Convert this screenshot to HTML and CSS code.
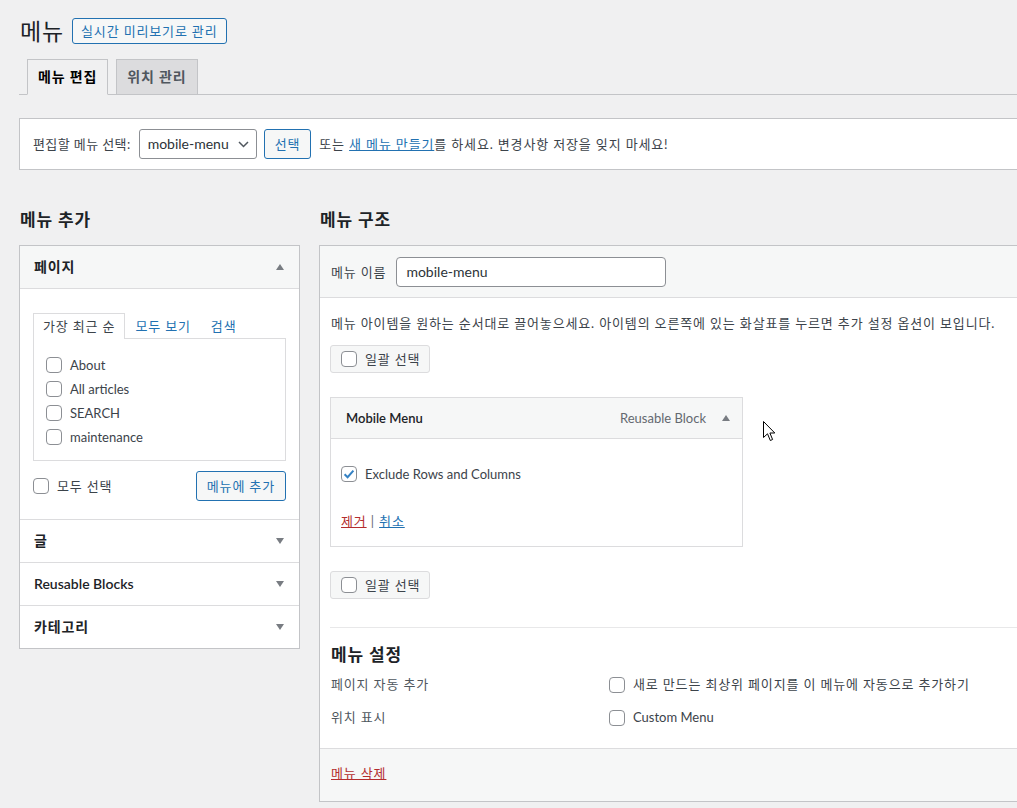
FILE: index.html
```html
<!DOCTYPE html>
<html lang="ko">
<head>
<meta charset="utf-8">
<title>메뉴</title>
<link rel="stylesheet" href="styles.css">
</head>
<body>
<div class="page">
  <div class="title-row">
    <h1>메뉴</h1>
    <a class="btn-outline" href="#">실시간 미리보기로 관리</a>
  </div>

  <nav class="tabs">
    <a class="tab active" href="#">메뉴 편집</a>
    <a class="tab" href="#">위치 관리</a>
  </nav>

  <div class="edit-bar">
    <span class="bar-label">편집할 메뉴 선택:</span>
    <div class="select en"><span>mobile-menu</span><svg width="11" height="7" viewBox="0 0 11 7"><path d="M1 1 L5.5 5.5 L10 1" fill="none" stroke="#50575e" stroke-width="1.5"/></svg></div>
    <span class="btn-secondary">선택</span>
    <span class="note">또는 <a href="#">새 메뉴 만들기</a>를 하세요. 변경사항 저장을 잊지 마세요!</span>
  </div>

  <div class="columns">
    <div class="col-left">
      <h2>메뉴 추가</h2>
      <div class="acc">
        <div class="acc-head open">
          <span>페이지</span>
          <svg class="tri" width="8" height="6" viewBox="0 0 8 6"><path d="M4 0 L8 6 L0 6Z" fill="#787c82"/></svg>
        </div>
        <div class="acc-body">
          <div class="subtabs">
            <span class="subtab active">가장 최근 순</span>
            <span class="subtab">모두 보기</span>
            <span class="subtab">검색</span>
          </div>
          <div class="subpanel">
            <ul class="checklist en">
              <li><span class="cb"></span>About</li>
              <li><span class="cb"></span>All articles</li>
              <li><span class="cb"></span>SEARCH</li>
              <li><span class="cb"></span>maintenance</li>
            </ul>
          </div>
          <div class="add-row">
            <label class="check-label"><span class="cb"></span>모두 선택</label>
            <span class="btn-secondary small">메뉴에 추가</span>
          </div>
        </div>
        <div class="acc-head">
          <span>글</span>
          <svg class="tri" width="8" height="6" viewBox="0 0 8 6"><path d="M0 0 L8 0 L4 6Z" fill="#787c82"/></svg>
        </div>
        <div class="acc-head">
          <span class="en">Reusable Blocks</span>
          <svg class="tri" width="8" height="6" viewBox="0 0 8 6"><path d="M0 0 L8 0 L4 6Z" fill="#787c82"/></svg>
        </div>
        <div class="acc-head">
          <span>카테고리</span>
          <svg class="tri" width="8" height="6" viewBox="0 0 8 6"><path d="M0 0 L8 0 L4 6Z" fill="#787c82"/></svg>
        </div>
      </div>
    </div>

    <div class="col-right">
      <h2>메뉴 구조</h2>
      <div class="menu-box">
        <div class="box-head">
          <span class="name-label">메뉴 이름</span>
          <div class="name-input en">mobile-menu</div>
        </div>
        <div class="box-body">
          <p class="desc">메뉴 아이템을 원하는 순서대로 끌어놓으세요. 아이템의 오른쪽에 있는 화살표를 누르면 추가 설정 옵션이 보입니다.</p>
          <div class="bulk"><span class="cb"></span>일괄 선택</div>

          <div class="item">
            <div class="item-head en">
              <span class="item-title">Mobile Menu</span>
              <span class="item-type">Reusable Block</span>
              <svg class="tri" width="8" height="6" viewBox="0 0 8 6"><path d="M4 0 L8 6 L0 6Z" fill="#787c82"/></svg>
            </div>
            <div class="item-body">
              <div class="item-check en"><span class="cb checked"><svg width="14" height="14" viewBox="0 0 14 14"><path d="M2.6 7.2 L5.6 10.2 L11.4 3.6" fill="none" stroke="#3582c4" stroke-width="2"/></svg></span>Exclude Rows and Columns</div>
              <div class="item-actions"><a class="danger" href="#">제거</a> <span class="sep">|</span> <a href="#">취소</a></div>
            </div>
          </div>

          <div class="bulk second"><span class="cb"></span>일괄 선택</div>

          <div class="settings">
            <h3>메뉴 설정</h3>
            <div class="set-row">
              <span class="set-label">페이지 자동 추가</span>
              <span class="set-value"><span class="cb"></span>새로 만드는 최상위 페이지를 이 메뉴에 자동으로 추가하기</span>
            </div>
            <div class="set-row">
              <span class="set-label">위치 표시</span>
              <span class="set-value en"><span class="cb"></span>Custom Menu</span>
            </div>
          </div>
        </div>
        <div class="box-foot"><a class="danger" href="#">메뉴 삭제</a></div>
      </div>
    </div>
  </div>
</div>

<svg class="cursor" width="13" height="21" viewBox="0 0 13 21"><path d="M0.5 0.5 L0.5 16.5 L4.5 12.8 L7.3 19.5 L9.6 18.5 L6.9 12 L11.8 12 Z" fill="#fff" stroke="#000" stroke-width="1"/></svg>
</body>
</html>
```

FILE: styles.css
```css
html, body {
  overflow: hidden;
}

body {
  margin: 0;
  background: #f0f0f1;
  font-family: "Lato", "Noto Sans CJK KR", sans-serif;
  font-size: 13px;
  line-height: 1.4;
  letter-spacing: 0.85px;
  color: #3c434a;
}

.en {
  letter-spacing: 0;
}

a {
  color: #2271b1;
}

.page {
  width: 1100px;
  padding: 18px 0 0 19px;
}

/* Title */
.title-row {
  display: flex;
  align-items: center;
  gap: 8px;
  height: 26px;
}

.title-row h1 {
  margin: 0 0 0 1px;
  font-size: 23px;
  font-weight: 400;
  line-height: 26px;
  color: #1d2327;
}

.btn-outline {
  box-sizing: border-box;
  height: 26px;
  display: inline-flex;
  align-items: center;
  padding: 0 8px;
  border: 1px solid #2271b1;
  border-radius: 3px;
  background: #f6f7f7;
  color: #2271b1;
  text-decoration: none;
  font-size: 13px;
}

/* Tabs */
.tabs {
  margin-top: 15px;
  display: flex;
  gap: 8px;
  padding-left: 8px;
  border-bottom: 1px solid #c3c4c7;
}

.tab {
  margin-bottom: -1px;
  padding: 5px 10px;
  border: 1px solid #c3c4c7;
  background: #dcdcde;
  color: #50575e;
  font-size: 14px;
  font-weight: 600;
  line-height: 24px;
  text-decoration: none;
}

.tab.active {
  background: #f0f0f1;
  border-bottom-color: #f0f0f1;
  color: #000;
}

/* Edit bar */
.edit-bar {
  margin-top: 23px;
  display: flex;
  align-items: center;
  padding: 10px 13px;
  background: #fff;
  border: 1px solid #c3c4c7;
}

.bar-label {
  letter-spacing: 0.4px;
}

.select {
  box-sizing: border-box;
  width: 118px;
  height: 30px;
  margin-left: 8px;
  display: flex;
  align-items: center;
  justify-content: space-between;
  padding: 0 7px 0 8px;
  border: 1px solid #8c8f94;
  border-radius: 3px;
  background: #fff;
  color: #2c3338;
  font-size: 14px;
}

.btn-secondary {
  box-sizing: border-box;
  height: 30px;
  margin-left: 7px;
  display: inline-flex;
  align-items: center;
  padding: 0 10px;
  border: 1px solid #2271b1;
  border-radius: 3px;
  background: #f6f7f7;
  color: #2271b1;
}

.btn-secondary.small {
  margin-left: 0;
}

.note {
  margin-left: 8px;
}

/* Columns */
.columns {
  margin-top: 38px;
  display: flex;
  gap: 19px;
  align-items: flex-start;
}

.columns h2 {
  margin: 0 0 13px 1px;
  font-size: 17px;
  font-weight: 600;
  line-height: 24px;
  color: #1d2327;
}

.col-left {
  width: 281px;
  flex: none;
}

.col-right {
  flex: 1;
}

/* Checkbox */
.cb {
  box-sizing: border-box;
  width: 16px;
  height: 16px;
  flex: none;
  display: inline-flex;
  align-items: center;
  justify-content: center;
  border: 1px solid #8c8f94;
  border-radius: 4px;
  background: #fff;
}

/* Accordion */
.acc {
  background: #fff;
  border: 1px solid #c3c4c7;
}

.acc-head {
  height: 42px;
  display: flex;
  align-items: center;
  justify-content: space-between;
  padding: 0 15px 0 14px;
  border-top: 1px solid #dcdcde;
  font-size: 14px;
  font-weight: 600;
  color: #1d2327;
}

.acc-head.open {
  border-top: none;
  border-bottom: 1px solid #dcdcde;
  background: #f6f7f7;
}

.acc-body {
  padding: 24px 13px 18px;
}

.subtabs {
  display: flex;
  height: 25px;
}

.subtab {
  box-sizing: border-box;
  height: 25px;
  padding: 0 9px;
  border: 1px solid transparent;
  border-bottom: none;
  line-height: 24px;
  color: #2271b1;
}

.subtab.active {
  height: 26px;
  border-color: #dcdcde;
  background: #fff;
  color: #3c434a;
  position: relative;
  z-index: 1;
}

.subpanel {
  border: 1px solid #dcdcde;
  padding: 14px 0 11px 12px;
}

.checklist {
  list-style: none;
  margin: 0;
  padding: 0;
}

.checklist li {
  height: 24px;
  display: flex;
  align-items: center;
  gap: 8px;
}

.add-row {
  margin-top: 10px;
  display: flex;
  align-items: center;
  justify-content: space-between;
}

.check-label {
  display: flex;
  align-items: center;
  gap: 8px;
}

/* Menu box */
.menu-box {
  background: #fff;
  border: 1px solid #c3c4c7;
  border-right: none;
}

.box-head {
  display: flex;
  align-items: center;
  gap: 10px;
  padding: 11px 11px 10px;
  background: #f6f7f7;
  border-bottom: 1px solid #dcdcde;
}

.name-input {
  box-sizing: border-box;
  width: 270px;
  height: 30px;
  display: flex;
  align-items: center;
  padding: 0 9px;
  border: 1px solid #8c8f94;
  border-radius: 4px;
  background: #fff;
  color: #2c3338;
  font-size: 14px;
}

.box-body {
  padding: 14px 0 0 10px;
}

.desc {
  margin: 0 0 0 1px;
  line-height: 22px;
}

.bulk {
  box-sizing: border-box;
  width: max-content;
  height: 28px;
  margin-top: 11px;
  display: flex;
  align-items: center;
  gap: 8px;
  padding: 0 9px 0 10px;
  white-space: nowrap;
  border: 1px solid #dcdcde;
  border-radius: 3px;
  background: #f6f7f7;
}

.bulk.second {
  margin-top: 24px;
}

.item {
  width: 413px;
  box-sizing: border-box;
  margin-top: 24px;
  border: 1px solid #dcdcde;
}

.item-head {
  height: 40px;
  display: flex;
  align-items: center;
  padding: 0 12px 0 15px;
  background: #f6f7f7;
  border-bottom: 1px solid #dcdcde;
}

.item-title {
  flex: 1;
  font-weight: 600;
  color: #1d2327;
}

.item-type {
  margin-right: 16px;
  color: #646970;
}

.item-body {
  padding: 24px 10px 14px;
}

.item-check {
  height: 22px;
  display: flex;
  align-items: center;
  gap: 8px;
}

.item-actions {
  margin-top: 25px;
  line-height: 22px;
}

.danger {
  color: #b32d2e;
}

.sep {
  color: #646970;
}

.settings {
  margin-top: 28px;
  padding: 15px 0 14px 1px;
  border-top: 1px solid #e8e8e9;
}

.settings h3 {
  margin: 0 0 1px;
  font-size: 17px;
  font-weight: 600;
  line-height: 24px;
  color: #1d2327;
}

.set-row {
  height: 33px;
  display: flex;
  align-items: center;
}

.set-label {
  width: 278px;
  color: #50575e;
}

.set-value {
  display: flex;
  align-items: center;
  gap: 8px;
}

.box-foot {
  padding: 11px 11px 15px;
  line-height: 26px;
  background: #f6f7f7;
  border-top: 1px solid #dcdcde;
}

.cursor {
  position: absolute;
  left: 763px;
  top: 421px;
}
```
